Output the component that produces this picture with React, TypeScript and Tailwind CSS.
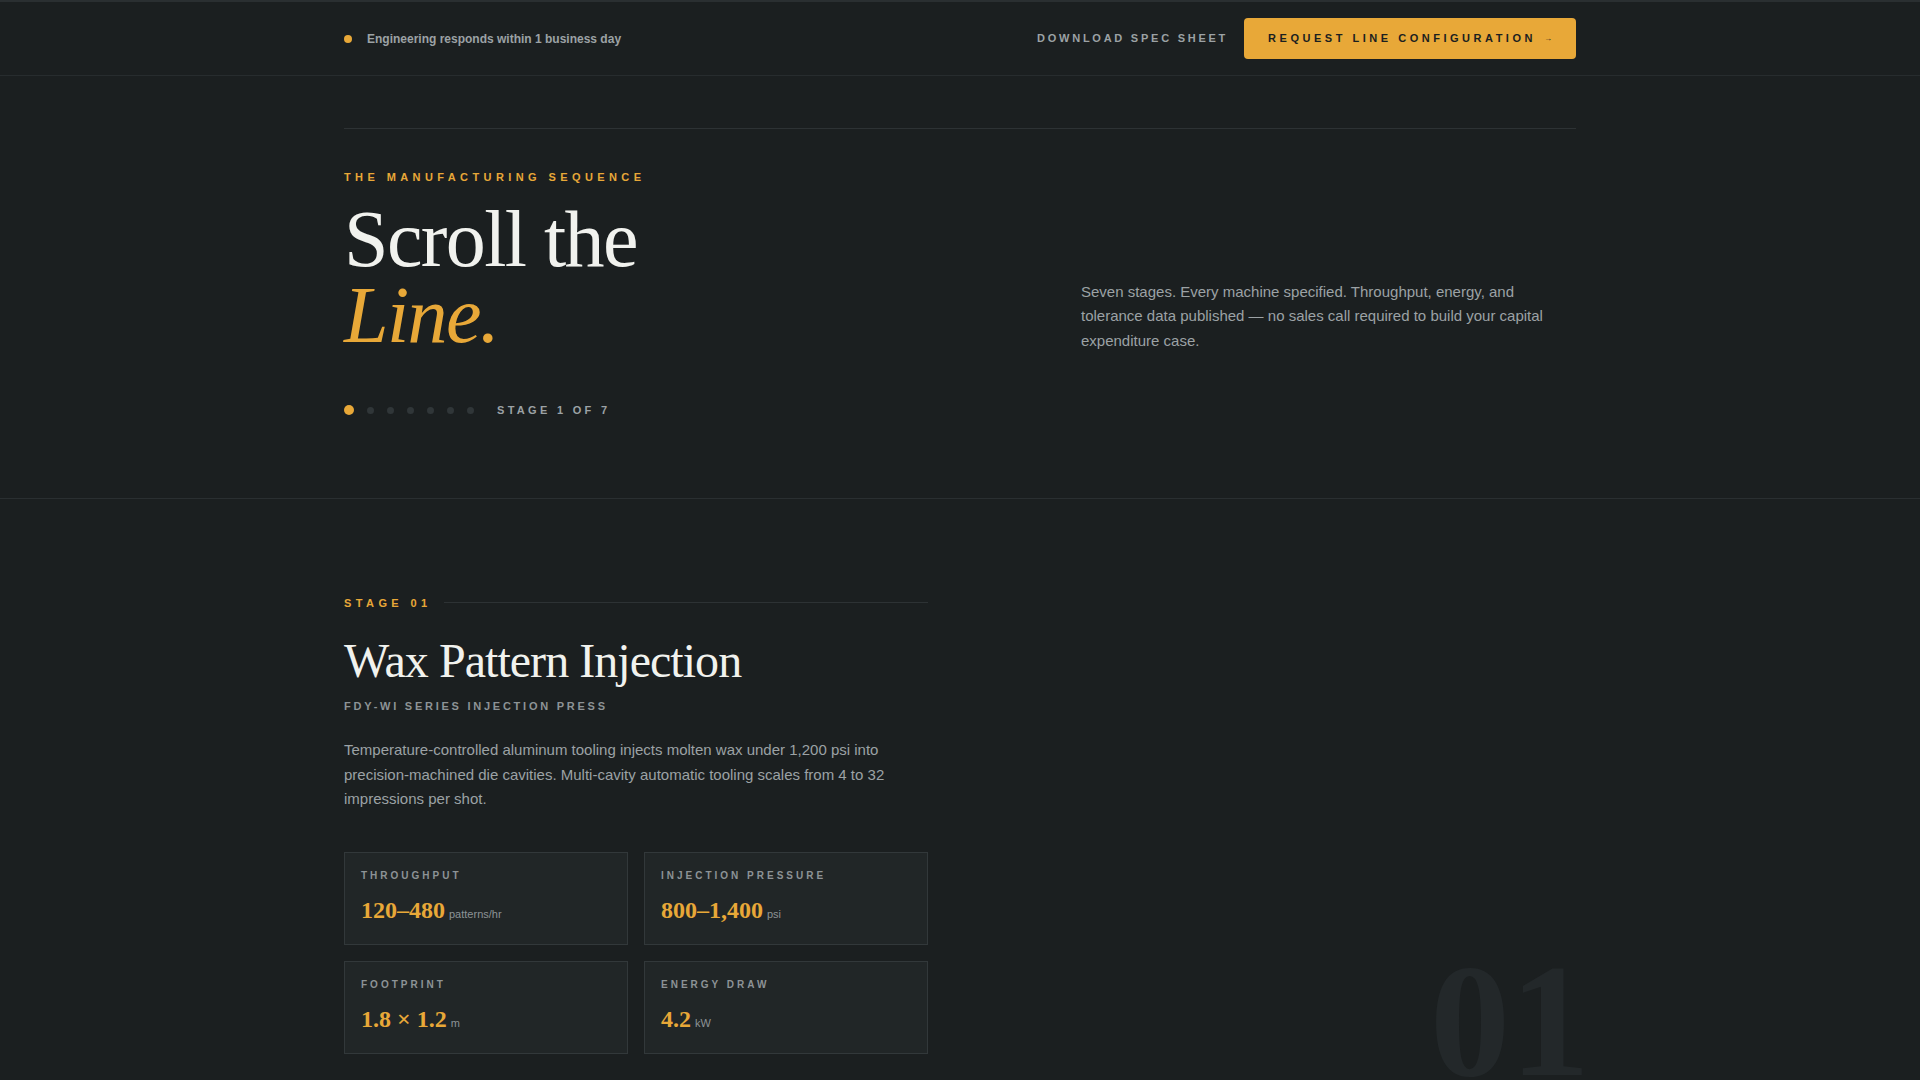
export default function App() {
  const serif = "font-['Liberation_Serif','Times_New_Roman',serif]";

  const specs = [
    { label: "Throughput", value: "120–480", unit: "patterns/hr" },
    { label: "Injection Pressure", value: "800–1,400", unit: "psi" },
    { label: "Footprint", value: "1.8 × 1.2", unit: "m" },
    { label: "Energy Draw", value: "4.2", unit: "kW" },
  ];

  const stages = [1, 2, 3, 4, 5, 6, 7];

  return (
    <div className="min-h-screen bg-[#1b1f20] font-['Liberation_Sans',Arial,sans-serif] text-[#9ca2a5]">
      {/* top bar */}
      <header className="border-t-2 border-b border-t-[#2a2f31] border-b-[#272c2e]">
        <div className="mx-auto flex h-[73px] max-w-7xl items-center justify-between px-6">
          <div className="flex items-center gap-[15px]">
            <span className="h-2 w-2 rounded-full bg-[#e8a838]" />
            <span className="text-xs font-bold text-[#9ca2a5]">Engineering responds within 1 business day</span>
          </div>
          <div className="flex items-center gap-4">
            <a className="text-[11px] font-semibold uppercase tracking-[0.25em] text-[#9ca2a5]">Download Spec Sheet</a>
            <button className="flex h-[41px] items-center gap-2 rounded-sm bg-[#e8a838] px-6 text-[11px] font-bold uppercase tracking-[0.32em] text-[#1b1f20]">
              Request Line Configuration <span className="text-[8px] tracking-normal">→</span>
            </button>
          </div>
        </div>
      </header>

      {/* hero */}
      <section className="border-b border-[#2a2f31] pt-[52px] pb-[79px]">
        <div className="mx-auto max-w-7xl px-6">
          <div className="border-t border-[#2d3234] pt-10">
            <div className="flex items-end justify-between">
              <div>
                <p className="text-[11px] font-bold uppercase leading-4 tracking-[0.4em] text-[#e8a838]">
                  The Manufacturing Sequence
                </p>
                <h1 className={`${serif} mt-4 text-[80px] leading-[0.95] tracking-[-0.02em] text-[#f1f2ee]`}>
                  Scroll the
                  <br />
                  <em className="text-[#e8a838]">Line.</em>
                </h1>
              </div>
              <p className="max-w-[495px] text-[15px] leading-[1.63] text-[#9ca2a5]">
                Seven stages. Every machine specified. Throughput, energy, and tolerance data published — no sales call required to build your capital expenditure case.
              </p>
            </div>
            <div className="mt-[49px] flex items-center">
              <div className="flex items-center gap-[13px]">
                {stages.map((s) =>
                  s === 1 ? (
                    <span key={s} className="h-[10px] w-[10px] rounded-full bg-[#e8a838]" />
                  ) : (
                    <span key={s} className="h-[7px] w-[7px] rounded-full bg-[#303638]" />
                  )
                )}
              </div>
              <span className="ml-[23px] text-[11px] font-bold uppercase tracking-[0.3em] text-[#9ca2a5]">Stage 1 of 7</span>
            </div>
          </div>
        </div>
      </section>

      {/* stage 01 */}
      <section className="pt-24 pb-32">
        <div className="mx-auto grid max-w-7xl grid-cols-2 gap-16 px-6">
          <div>
            <div className="flex items-center gap-3">
              <span className="text-[11px] font-bold uppercase leading-4 tracking-[0.4em] text-[#e8a838]">Stage 01</span>
              <span className="h-px flex-1 bg-[#2d3234]" />
            </div>
            <h2 className={`${serif} mt-6 text-5xl leading-[1.1] tracking-[-0.02em] text-[#f1f2ee]`}>Wax Pattern Injection</h2>
            <p className="mt-[11px] text-[11px] font-bold uppercase leading-4 tracking-[0.25em] text-[#8d9396]">
              FDY-WI Series Injection Press
            </p>
            <p className="mt-6 text-[15px] leading-[1.63] text-[#9ca2a5]">
              Temperature-controlled aluminum tooling injects molten wax under 1,200 psi into precision-machined die cavities. Multi-cavity automatic tooling scales from 4 to 32 impressions per shot.
            </p>
            <div className="mt-10 grid grid-cols-2 gap-4">
              {specs.map((spec) => (
                <div key={spec.label} className="border border-[#32383a] bg-[#212627] px-4 pt-[15px] pb-[17px]">
                  <p className="text-[10px] font-bold uppercase leading-[15px] tracking-[0.3em] text-[#8d9396]">{spec.label}</p>
                  <p className="mt-[11px] flex items-baseline gap-1 leading-[26px]">
                    <span className={`${serif} text-2xl font-bold text-[#e8a838]`}>{spec.value}</span>
                    <span className="text-[11px] text-[#8d9396]">{spec.unit}</span>
                  </p>
                </div>
              ))}
            </div>
          </div>
          <div className="relative">
            <span className={`${serif} absolute right-[-14px] top-[346px] text-[160px] font-bold leading-none text-[#23282a]`}>
              01
            </span>
          </div>
        </div>
      </section>
    </div>
  );
}
